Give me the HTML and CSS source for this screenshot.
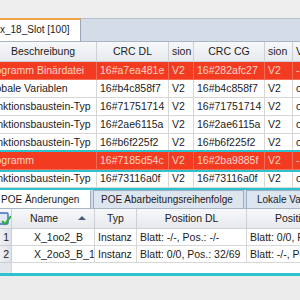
FILE: index.html
```html
<!DOCTYPE html>
<html lang="de">
<head>
    <meta charset="UTF-8">
    <title>CRC Vergleich</title>
    <link rel="stylesheet" href="styles.css">
</head>
<body>
    <div class="topbar"></div>
    <div class="doc_tabs">
        <div class="doc_tab">x_18_Slot [100]</div>
    </div>
    <div class="top_grid">
        <div class="row head">
            <div class="cell">Beschreibung</div>
            <div class="cell">CRC DL</div>
            <div class="cell">sion</div>
            <div class="cell">CRC CG</div>
            <div class="cell">sion</div>
            <div class="cell">V</div>
        </div>
        <div class="row red">
            <div class="cell">Programm Binärdatei</div>
            <div class="cell">16#a7ea481e</div>
            <div class="cell">V2</div>
            <div class="cell">16#282afc27</div>
            <div class="cell">V2</div>
            <div class="cell">-</div>
        </div>
        <div class="row">
            <div class="cell">Globale Variablen</div>
            <div class="cell">16#b4c858f7</div>
            <div class="cell">V2</div>
            <div class="cell">16#b4c858f7</div>
            <div class="cell">V2</div>
            <div class="cell">o</div>
        </div>
        <div class="row">
            <div class="cell">Funktionsbaustein-Typ</div>
            <div class="cell">16#71751714</div>
            <div class="cell">V2</div>
            <div class="cell">16#71751714</div>
            <div class="cell">V2</div>
            <div class="cell">o</div>
        </div>
        <div class="row">
            <div class="cell">Funktionsbaustein-Typ</div>
            <div class="cell">16#2ae6115a</div>
            <div class="cell">V2</div>
            <div class="cell">16#2ae6115a</div>
            <div class="cell">V2</div>
            <div class="cell">o</div>
        </div>
        <div class="row">
            <div class="cell">Funktionsbaustein-Typ</div>
            <div class="cell">16#b6f225f2</div>
            <div class="cell">V2</div>
            <div class="cell">16#b6f225f2</div>
            <div class="cell">V2</div>
            <div class="cell">o</div>
        </div>
        <div class="row red selected">
            <div class="cell">Programm</div>
            <div class="cell">16#7185d54c</div>
            <div class="cell">V2</div>
            <div class="cell">16#2ba9885f</div>
            <div class="cell">V2</div>
            <div class="cell">-</div>
        </div>
        <div class="row">
            <div class="cell">Funktionsbaustein-Typ</div>
            <div class="cell">16#73116a0f</div>
            <div class="cell">V2</div>
            <div class="cell">16#73116a0f</div>
            <div class="cell">V2</div>
            <div class="cell">o</div>
        </div>
    </div>

    <div class="panel_tabs">
        <div class="panel_tab active">POE Änderungen</div>
        <div class="panel_tab">POE Abarbeitungsreihenfolge</div>
        <div class="panel_tab">Lokale Variablen</div>
    </div>
    <div class="bottom_grid">
        <div class="brow head">
            <div class="cell rownum">
                <svg width="12" height="16" viewBox="0 0 12 16">
                    <rect x="-4" y="2" width="12" height="11" rx="1" fill="#dfe8f5" stroke="#3a6fc4" stroke-width="1.4"/>
                    <path d="M2 10 L5 13 L11 5" fill="none" stroke="#2fae3a" stroke-width="2"/>
                </svg>
            </div>
            <div class="cell name_head">Name<span class="sort"></span></div>
            <div class="cell">Typ</div>
            <div class="cell">Position DL</div>
            <div class="cell cg_head">Position CG</div>
        </div>
        <div class="brow">
            <div class="cell rownum">1</div>
            <div class="cell name">X_1oo2_B</div>
            <div class="cell">Instanz</div>
            <div class="cell">Blatt: -/-, Pos.: -/-</div>
            <div class="cell">Blatt: 0/0, Pos.: 32/69</div>
        </div>
        <div class="brow">
            <div class="cell rownum">2</div>
            <div class="cell name">X_2oo3_B_1</div>
            <div class="cell">Instanz</div>
            <div class="cell">Blatt: 0/0, Pos.: 32/69</div>
            <div class="cell">Blatt: -/-, Pos.: -/-</div>
        </div>
        <div class="bottom_fill">
            <div class="rownum_fill"></div>
        </div>
    </div>
    <div class="focus_line"></div>
</body>
</html>
```

FILE: styles.css
```css
*{margin:0; padding:0; box-sizing: border-box;}
body{
    width:300px;
    height:300px;
    overflow:hidden;
    background-color:#ececec;
    color:#1c1c1c;
    font-family:"Liberation Sans", Arial, sans-serif;
    font-size:10.5px;
}

.topbar{height:18px; background-color:#eeeeee;}

.doc_tabs{
    display:flex;
    height:24px;
    background-color:#d4dce7;
    border-top:1px solid #b3bfcd;
    border-bottom:1px solid #a9b5c3;
}
.doc_tab{
    width:81px;
    height:23px;
    margin-top:-1px;
    background-color:#fff;
    border-top:2px solid #f2a444;
    border-right:1px solid #97a5b6;
    line-height:20px;
    font-size:10px;
    white-space:nowrap;
    overflow:hidden;
}

/* oberes Grid, nach links gescrollt */
.top_grid{
    background-color:#fff;
    border-bottom:2px solid #2ec2cf;
    overflow:hidden;
}
.row{
    display:grid;
    grid-template-columns:115px 72px 25px 71px 28px 40px;
    margin-left:-18px;
    height:18px;
}
.row .cell{
    border-right:1px solid #d7d7d7;
    border-bottom:1px solid #d7d7d7;
    padding-left:3px;
    line-height:17px;
    white-space:nowrap;
    overflow:hidden;
}
.row.head{height:20px;}
.row.head .cell{
    background:linear-gradient(#f7f8fa, #e7e9ed);
    border-color:#cdd1d7;
    text-align:center;
    padding-left:0;
    line-height:19px;
}
.row.head .cell:first-child{padding-left:8px;}
.row.head .cell:nth-child(3),
.row.head .cell:nth-child(5),
.row.head .cell:nth-child(6){text-align:left; padding-left:3px;}

.row.red .cell{
    background-color:#f23b20;
    color:#ffd3c8;
    border-color:#f56d57;
}
.row.selected{
    position:relative;
    outline:2px solid #2ec2cf;
}

/* unteres Panel */
.panel_tabs{
    display:flex;
    height:19px;
    background-color:#d4dce7;
    border-bottom:1px solid #a9b5c3;
}
.panel_tab{
    flex:none;
    padding:0 10px;
    line-height:18px;
    font-size:10px;
    background-color:#dde5ef;
    border:1px solid #9eaec1;
    border-bottom:none;
    margin-right:2px;
    white-space:nowrap;
}
.panel_tab.active{
    background-color:#fff;
    width:91px;
    padding-left:1px;
    border-left:none;
    border-top-color:#fff;
}
.panel_tab:nth-child(2){width:151px; padding-left:7px;}

.bottom_grid{background-color:#fff;}
.brow{
    display:grid;
    grid-template-columns:12px 83px 42px 110px 80px;
    height:17px;
}
.brow .cell{
    border-right:1px solid #d7d7d7;
    border-bottom:1px solid #d7d7d7;
    padding-left:3px;
    line-height:16px;
    white-space:nowrap;
    overflow:hidden;
}
.brow.head{height:20px;}
.brow.head .cell{
    background:linear-gradient(#f7f8fa, #e7e9ed);
    border-color:#cdd1d7;
    text-align:center;
    padding-left:0;
    line-height:19px;
}
.brow .rownum{
    background:linear-gradient(90deg, #eef0f3, #dfe2e7);
    border-color:#c9ced5;
    text-align:right;
    padding:0 2px 0 0;
}
.brow.head .rownum{padding:2px 0 0 0; text-align:left;}
.brow .name{padding-left:22px;}
.name_head{position:relative; padding-right:18px;}
.sort{
    position:absolute;
    right:8px;
    top:7px;
    border-left:4px solid transparent;
    border-right:4px solid transparent;
    border-bottom:4px solid #4b5b78;
}
.cg_head{text-align:left !important; padding-left:28px !important;}

.bottom_fill{height:10px; display:flex;}
.rownum_fill{width:12px; background-color:#e3e7ec; border-right:1px solid #d0d5db;}

.focus_line{height:3px; background-color:#2ec2cf;}
```
